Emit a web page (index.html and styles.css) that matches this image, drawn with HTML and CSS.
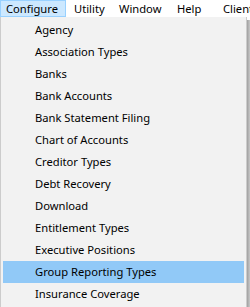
FILE: index.html
```html
<!DOCTYPE html>
<html>
<head>
<meta charset="utf-8">
<link rel="stylesheet" href="styles.css">
</head>
<body>
<div class="menubar">
  <span class="mb-item active">Configure</span>
  <span class="mb-item w-utility">Utility</span>
  <span class="mb-item w-window">Window</span>
  <span class="mb-item w-help">Help</span>
  <span class="mb-item">Client</span>
</div>
<div class="dropdown-wrap">
  <ul class="dropdown">
    <li>Agency</li>
    <li>Association Types</li>
    <li>Banks</li>
    <li>Bank Accounts</li>
    <li>Bank Statement Filing</li>
    <li>Chart of Accounts</li>
    <li>Creditor Types</li>
    <li>Debt Recovery</li>
    <li>Download</li>
    <li>Entitlement Types</li>
    <li>Executive Positions</li>
    <li class="hover">Group Reporting Types</li>
    <li>Insurance Coverage</li>
  </ul>
  <div class="shadow"></div>
</div>
</body>
</html>
```
FILE: styles.css
```css
html, body {
  margin: 0;
  padding: 0;
  background: #ffffff;
  font-family: "Noto Sans", "DejaVu Sans", sans-serif;
  font-size: 11.2px;
  color: #000;
  overflow: hidden;
}
.menubar {
  display: flex;
  height: 17px;
  background: #ffffff;
  white-space: nowrap;
}
.mb-item {
  box-sizing: border-box;
  height: 17px;
  line-height: 15px;
  padding: 0 0 0 7px;
  border: 1px solid transparent;
  flex: none;
}
.mb-item.active {
  background: #cce8ff;
  border-color: #99d1ff;
  width: 66px;
  padding-left: 5px;
}
.w-utility { width: 45px; }
.w-window { width: 58px; }
.w-help { width: 46px; }
.dropdown-wrap {
  display: flex;
  width: 250px;
}
.dropdown {
  list-style: none;
  margin: 0;
  padding: 2px 2px;
  width: 247px;
  flex: none;
  box-sizing: border-box;
  background: #f2f2f2;
  border: 1px solid #cccccc;
  border-top: none;
}
.dropdown li {
  height: 22px;
  line-height: 22px;
  padding-left: 32px;
  white-space: nowrap;
}
.dropdown li.hover {
  background: #91c9f7;
}
.shadow {
  width: 3px;
  margin-top: 3px;
  background: linear-gradient(to right, #a0a0a0, #c8c8c8);
  height: 300px;
}
```
